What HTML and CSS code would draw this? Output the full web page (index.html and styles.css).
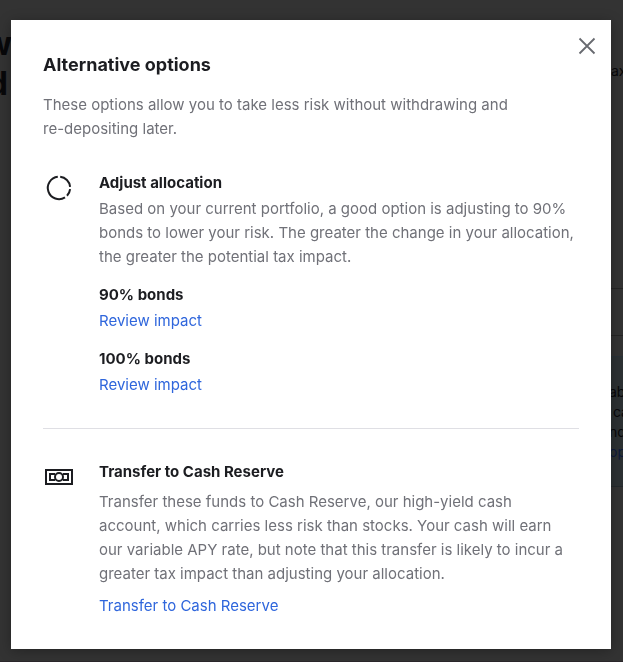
FILE: index.html
```html
<!DOCTYPE html>
<html lang="en">
<head>
<meta charset="UTF-8">
<meta name="viewport" content="width=device-width, initial-scale=1">
<title>Alternative options</title>
<link rel="stylesheet" href="styles.css">
</head>
<body>

	<!-- page under the dialog -->
	<div class="page" aria-hidden="true">
		<div class="page-title">
			<span>w</span>
			<span>d</span>
		</div>
		<div class="page-side">
			<div class="side-top">ax</div>
			<div class="side-row"></div>
			<div class="side-note">
				<span>ab</span>
				<span>&nbsp;ca</span>
				<span>nd</span>
				<span class="note-link">op</span>
			</div>
		</div>
	</div>

	<div class="overlay">
		<div class="modal" role="dialog" aria-modal="true" aria-labelledby="modalTitle">
			<button type="button" class="close" aria-label="Close">
				<svg width="18" height="18" viewBox="0 0 18 18">
					<path d="M1.5 1.5L16.5 16.5M16.5 1.5L1.5 16.5" fill="none" stroke="currentColor" stroke-width="1.8"/>
				</svg>
			</button>

			<h1 id="modalTitle">Alternative options</h1>
			<p class="intro">These options allow you to take less risk without withdrawing and <span class="nowrap">re-depositing</span> later.</p>

			<section class="option">
				<svg class="icon" width="32" height="32" viewBox="0 0 32 32">
					<g fill="none" stroke="#1c1d21" stroke-width="2">
						<path d="M14.8 5.8A11.2 11.2 0 1 0 22 26.4"/>
						<path d="M17.2 5.8A11.2 11.2 0 0 1 27.1 15.8"/>
						<path d="M27.1 18.2A11.2 11.2 0 0 1 24 24.8"/>
					</g>
				</svg>
				<div class="option-body">
					<h2>Adjust allocation</h2>
					<p>Based on your current portfolio, a good option is adjusting to 90% bonds to lower your risk. The greater the change in your allocation, the greater the potential tax impact.</p>
					<h3>90% bonds</h3>
					<a href="#">Review impact</a>
					<h3>100% bonds</h3>
					<a href="#">Review impact</a>
				</div>
			</section>

			<hr>

			<section class="option transfer">
				<svg class="icon" width="32" height="32" viewBox="0 0 32 32">
					<g fill="none" stroke="#1c1d21" stroke-width="2">
						<rect x="3" y="10" width="26" height="14"/>
						<path d="M12 14H7V20H12M20 14H25V20H20"/>
						<circle cx="16" cy="17" r="4"/>
					</g>
				</svg>
				<div class="option-body">
					<h2>Transfer to Cash Reserve</h2>
					<p>Transfer these funds to Cash Reserve, our high-yield cash account, which carries less risk than stocks. Your cash will earn our variable APY rate, but note that this transfer is likely to incur a greater tax impact than adjusting your allocation.</p>
					<a href="#">Transfer to Cash Reserve</a>
				</div>
			</section>
		</div>
	</div>

</body>
</html>
```

FILE: styles.css
```css
* {
	box-sizing: border-box;
}

body {
	margin: 0;
	background: #333333;
	color: #1c1d21;
	font-family: Inter, "Liberation Sans", sans-serif;
	font-size: 15px;
	line-height: 24px;
}

h1, h2, h3, p {
	margin: 0;
}

/* page behind */
.page {
	display: flex;
	justify-content: space-between;
	min-height: 100vh;
	overflow: hidden;
	border-bottom: 1px solid #2b272b;
	color: #08080a;
}

.page-title {
	display: flex;
	flex-direction: column;
	align-items: flex-end;
	width: 12px;
	padding-top: 24px;
	font-size: 32px;
	font-weight: bold;
	line-height: 40px;
}

.page-title span:last-child {
	padding-right: 4px;
}

.page-side {
	width: 12px;
	font-size: 14px;
	line-height: 20px;
	white-space: nowrap;
}

.side-top {
	height: 288px;
	padding-top: 61px;
}

.side-row {
	height: 48px;
	border-top: 1px solid #252525;
	border-bottom: 1px solid #252525;
}

.side-note {
	display: flex;
	flex-direction: column;
	margin-top: 20px;
	padding: 25px 0 24px;
	border-top: 1px solid #293137;
	border-bottom: 1px solid #24292c;
	background: #2c3133;
}

.side-note span {
	margin-left: -2px;
}

.side-note .note-link {
	color: #0e1a3c;
}

/* dialog */
.overlay {
	position: fixed;
	inset: 0;
	overflow: auto;
	padding: 20px 12px 13px 11px;
}

.modal {
	position: relative;
	padding: 33px 32px 31px;
	background: #ffffff;
	box-shadow: 0 2px 12px rgba(0, 0, 0, 0.3);
}

.close {
	position: absolute;
	top: 17px;
	right: 15px;
	width: 18px;
	height: 18px;
	padding: 0;
	border: none;
	background: none;
	color: #686a70;
	cursor: pointer;
}

.close svg {
	display: block;
}

h1 {
	font-size: 18px;
	font-weight: bold;
}

h2, h3 {
	font-size: 15px;
	font-weight: bold;
}

p {
	color: #707178;
}

.intro {
	max-width: 500px;
	margin-top: 16px;
}

.nowrap {
	white-space: nowrap;
}

.option {
	display: flex;
	gap: 24px;
	margin-top: 30px;
}

.icon {
	flex: none;
}

.option-body {
	flex: 1;
}

.option-body h2 {
	margin-bottom: 2px;
}

.option-body h3 {
	margin: 14px 0 2px;
}

.option-body a {
	display: block;
	color: #2f66dc;
	text-decoration: none;
}

hr {
	height: 1px;
	margin: 31px 0;
	border: none;
	background: #dfdfe4;
}

.transfer {
	margin-top: 0;
}

.transfer h2 {
	margin-bottom: 6px;
}

.transfer p {
	padding-right: 4px;
}

.transfer a {
	margin-top: 8px;
}
```
